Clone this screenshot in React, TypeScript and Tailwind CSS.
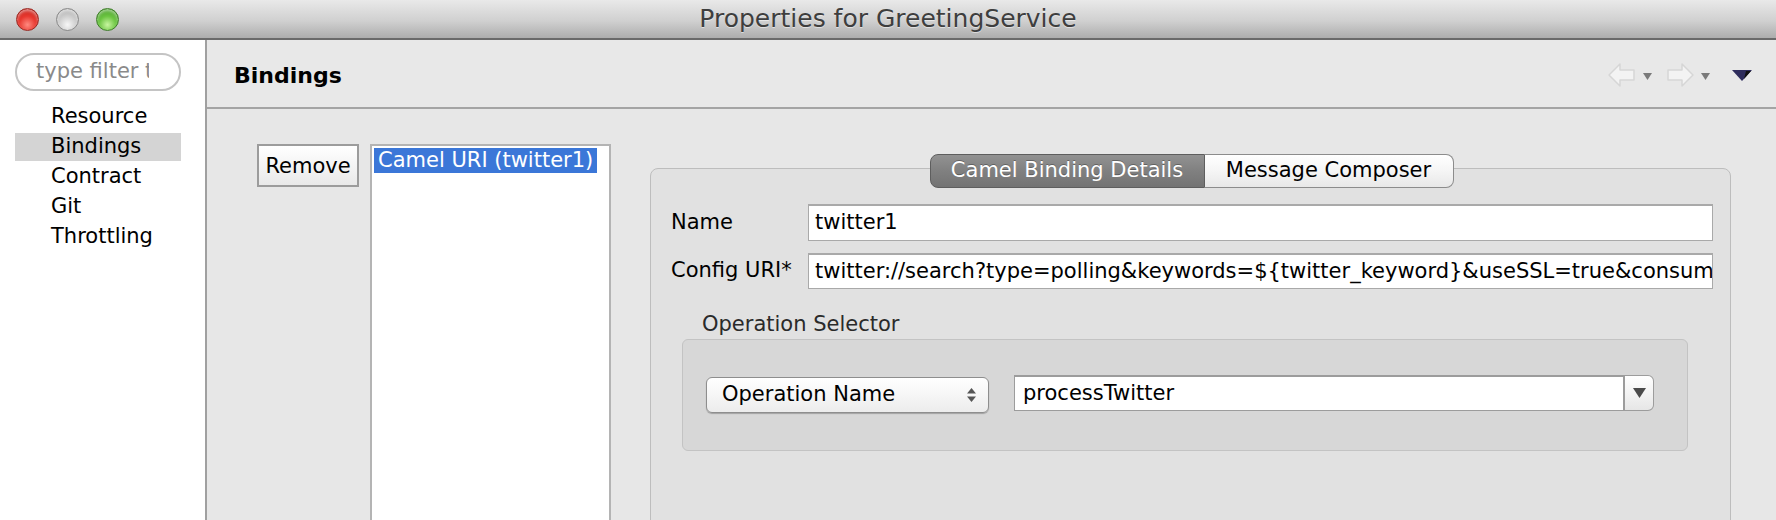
import React from "react";

function NavArrows() {
  return (
    <div className="flex items-center gap-0">
      <svg width="30" height="26" viewBox="0 0 30 26" className="mr-[6px]">
        <path d="M2 13 L13 2 L13 8 L27 8 L27 18 L13 18 L13 24 Z" fill="#f3f3f3" stroke="#d6d6d6" strokeWidth="1.5" strokeLinejoin="round" />
      </svg>
      <svg width="9" height="7" viewBox="0 0 9 7" className="mr-[13px] mt-[2px]">
        <path d="M0 0 L9 0 L4.5 7 Z" fill="#7a7a7a" />
      </svg>
      <svg width="30" height="26" viewBox="0 0 30 26" className="mr-[6px]">
        <path d="M28 13 L17 2 L17 8 L3 8 L3 18 L17 18 L17 24 Z" fill="#f3f3f3" stroke="#d6d6d6" strokeWidth="1.5" strokeLinejoin="round" />
      </svg>
      <svg width="9" height="7" viewBox="0 0 9 7" className="mr-[22px] mt-[2px]">
        <path d="M0 0 L9 0 L4.5 7 Z" fill="#7a7a7a" />
      </svg>
      <svg width="20" height="11" viewBox="0 0 20 11">
        <path d="M0 0 L20 0 L10 11 Z" fill="#2e2c5c" />
        <path d="M14 1 L19 1 L12 9 Z" fill="#111" />
      </svg>
    </div>
  );
}

export default function App() {
  return (
    <div className="w-[1776px] h-[520px] overflow-hidden flex flex-col bg-[#e8e8e8] text-black font-[family-name:'DejaVu_Sans',sans-serif]">
      {/* Title bar */}
      <div className="h-[40px] shrink-0 grid grid-cols-[1fr_auto_1fr] items-center bg-[linear-gradient(#e9e9e9,#d0d0d0_55%,#adadad)] border-b-2 border-[#6a6a6a]">
        <div className="flex items-center gap-[17px] pl-[16px] pb-[2px]">
          <div className="w-[23px] h-[23px] rounded-full border border-[#9a2a23] bg-[radial-gradient(circle_at_50%_75%,#ff8a80_0%,#e8382f_45%,#b81d16_100%)] shadow-[inset_0_2px_3px_rgba(255,255,255,0.5)]" />
          <div className="w-[23px] h-[23px] rounded-full border border-[#8a8a8a] bg-[radial-gradient(circle_at_50%_75%,#f7f7f7_0%,#cfcfcf_45%,#a2a2a2_100%)] shadow-[inset_0_2px_3px_rgba(255,255,255,0.6)]" />
          <div className="w-[23px] h-[23px] rounded-full border border-[#3f7d2a] bg-[radial-gradient(circle_at_50%_75%,#c8f5a0_0%,#6cc542_45%,#3a8f20_100%)] shadow-[inset_0_2px_3px_rgba(255,255,255,0.5)]" />
        </div>
        <div className="text-[25px] text-[#3e3e3e] pb-[3px] [text-shadow:0_1px_0_rgba(255,255,255,0.5)]">
          Properties for GreetingService
        </div>
        <div />
      </div>

      {/* Body */}
      <div className="flex flex-1 min-h-0">
        {/* Sidebar */}
        <div className="w-[207px] shrink-0 bg-white border-r-2 border-[#a0a0a0] flex flex-col">
          <div className="mt-[13px] ml-[15px] w-[166px] h-[38px] rounded-full border-2 border-[#c4c4c4] bg-white flex items-center pl-[19px]">
            <span className="w-[113px] overflow-hidden whitespace-nowrap text-[21px] text-[#8a8a8a]">type filter text</span>
          </div>
          <div className="mt-[12px] flex flex-col gap-[2px]">
            {["Resource", "Bindings", "Contract", "Git", "Throttling"].map((t) => (
              <div
                key={t}
                className={
                  t === "Bindings"
                    ? "ml-[15px] mr-[24px] h-[28px] flex items-center pl-[36px] text-[21px] bg-[#d4d4d4]"
                    : "ml-[15px] mr-[24px] h-[28px] flex items-center pl-[36px] text-[21px]"
                }
              >
                {t}
              </div>
            ))}
          </div>
        </div>

        {/* Main */}
        <div className="flex-1 min-w-0 flex flex-col">
          <div className="h-[69px] shrink-0 flex items-center justify-between pl-[27px] pr-[24px] pt-[3px] border-b-2 border-[#a4a4a4] bg-[#e8e8e8]">
            <div className="text-[22px] font-bold">Bindings</div>
            <NavArrows />
          </div>

          <div className="flex-1 min-h-0 flex items-start pt-[35px] pl-[50px] bg-[#e7e7e7]">
            <button className="w-[102px] h-[43px] shrink-0 border-2 border-[#9c9c9c] bg-[linear-gradient(#ffffff,#f4f4f4_50%,#e9e9e9)] text-[21px] flex items-center justify-center pt-[2px]">
              Remove
            </button>
            <div className="ml-[11px] w-[241px] h-[420px] shrink-0 bg-white border-2 border-[#b4b4b4] pt-[2px] pl-[2px]">
              <span className="inline-block bg-[#3b77d8] text-white text-[21px] px-[4px] h-[25px] leading-[25px]">Camel URI (twitter1)</span>
            </div>

            {/* Group box */}
            <div className="ml-[39px] mr-[45px] mt-[24px] flex-1 min-w-0 h-[400px] rounded-[8px] border border-[#bdbdbd] bg-[#e1e1e1] flex flex-col">
              <div className="-mt-[15px] flex justify-center pl-[2px]">
                <div className="w-[275px] h-[34px] rounded-l-[8px] border border-[#5e5e5e] bg-[linear-gradient(#929292,#808080_50%,#737373)] text-white text-[21px] flex items-center justify-center [text-shadow:0_-1px_0_rgba(0,0,0,0.3)]">
                  Camel Binding Details
                </div>
                <div className="w-[249px] h-[34px] rounded-r-[8px] border border-l-0 border-[#8c8c8c] bg-[linear-gradient(#ffffff,#f5f5f5_50%,#e8e8e8)] text-[21px] flex items-center justify-center">
                  Message Composer
                </div>
              </div>

              <div className="mt-[16px] flex items-center pl-[20px] pr-[17px]">
                <div className="w-[137px] text-[21px]">Name</div>
                <div className="flex-1 h-[37px] bg-white border border-[#a9a9a9] border-t-2 flex items-center pl-[6px] text-[21px]">
                  twitter1
                </div>
              </div>
              <div className="mt-[12px] flex items-center pl-[20px] pr-[17px]">
                <div className="w-[137px] text-[21px]">Config URI*</div>
                <div className="flex-1 min-w-0 h-[36px] bg-white border border-[#a9a9a9] border-t-2 flex items-center pl-[6px] text-[21px] overflow-hidden whitespace-nowrap">
                  {"twitter://search?type=polling&keywords=${twitter_keyword}&useSSL=true&consumerKey=${consumer_key}"}
                </div>
              </div>

              <div className="mt-[22px] pl-[51px] h-[27px] leading-[27px] text-[21px] text-[#2a2a2a]">Operation Selector</div>
              <div className="mt-[1px] ml-[31px] mr-[42px] h-[112px] rounded-[6px] border border-[#c3c3c3] bg-[#d7d7d7] flex items-center pl-[23px] pr-[33px]">
                <div className="w-[283px] h-[36px] shrink-0 rounded-[6px] border border-[#8e8e8e] bg-[linear-gradient(#ffffff,#f6f6f6_50%,#ececec)] shadow-[0_1px_1px_rgba(0,0,0,0.25)] flex items-center justify-between pl-[15px] pr-[12px] text-[21px]">
                  <span>Operation Name</span>
                  <svg width="9" height="14" viewBox="0 0 9 14">
                    <path d="M0 5.5 L9 5.5 L4.5 0 Z" fill="#555" />
                    <path d="M0 8.5 L9 8.5 L4.5 14 Z" fill="#555" />
                  </svg>
                </div>
                <div className="ml-[25px] flex-1 h-[36px] -mt-[4px] flex">
                  <div className="flex-1 bg-white border border-[#9c9c9c] border-t-2 border-r-0 flex items-center pl-[8px] text-[21px]">
                    processTwitter
                  </div>
                  <div className="w-[31px] rounded-r-[6px] border border-[#9c9c9c] border-l-2 bg-[linear-gradient(#ffffff,#f3f3f3_50%,#e6e6e6)] flex items-center justify-center">
                    <svg width="13" height="10" viewBox="0 0 13 10">
                      <path d="M0 0 L13 0 L6.5 10 Z" fill="#4a4a4a" />
                    </svg>
                  </div>
                </div>
              </div>
            </div>
          </div>
        </div>
      </div>
    </div>
  );
}
